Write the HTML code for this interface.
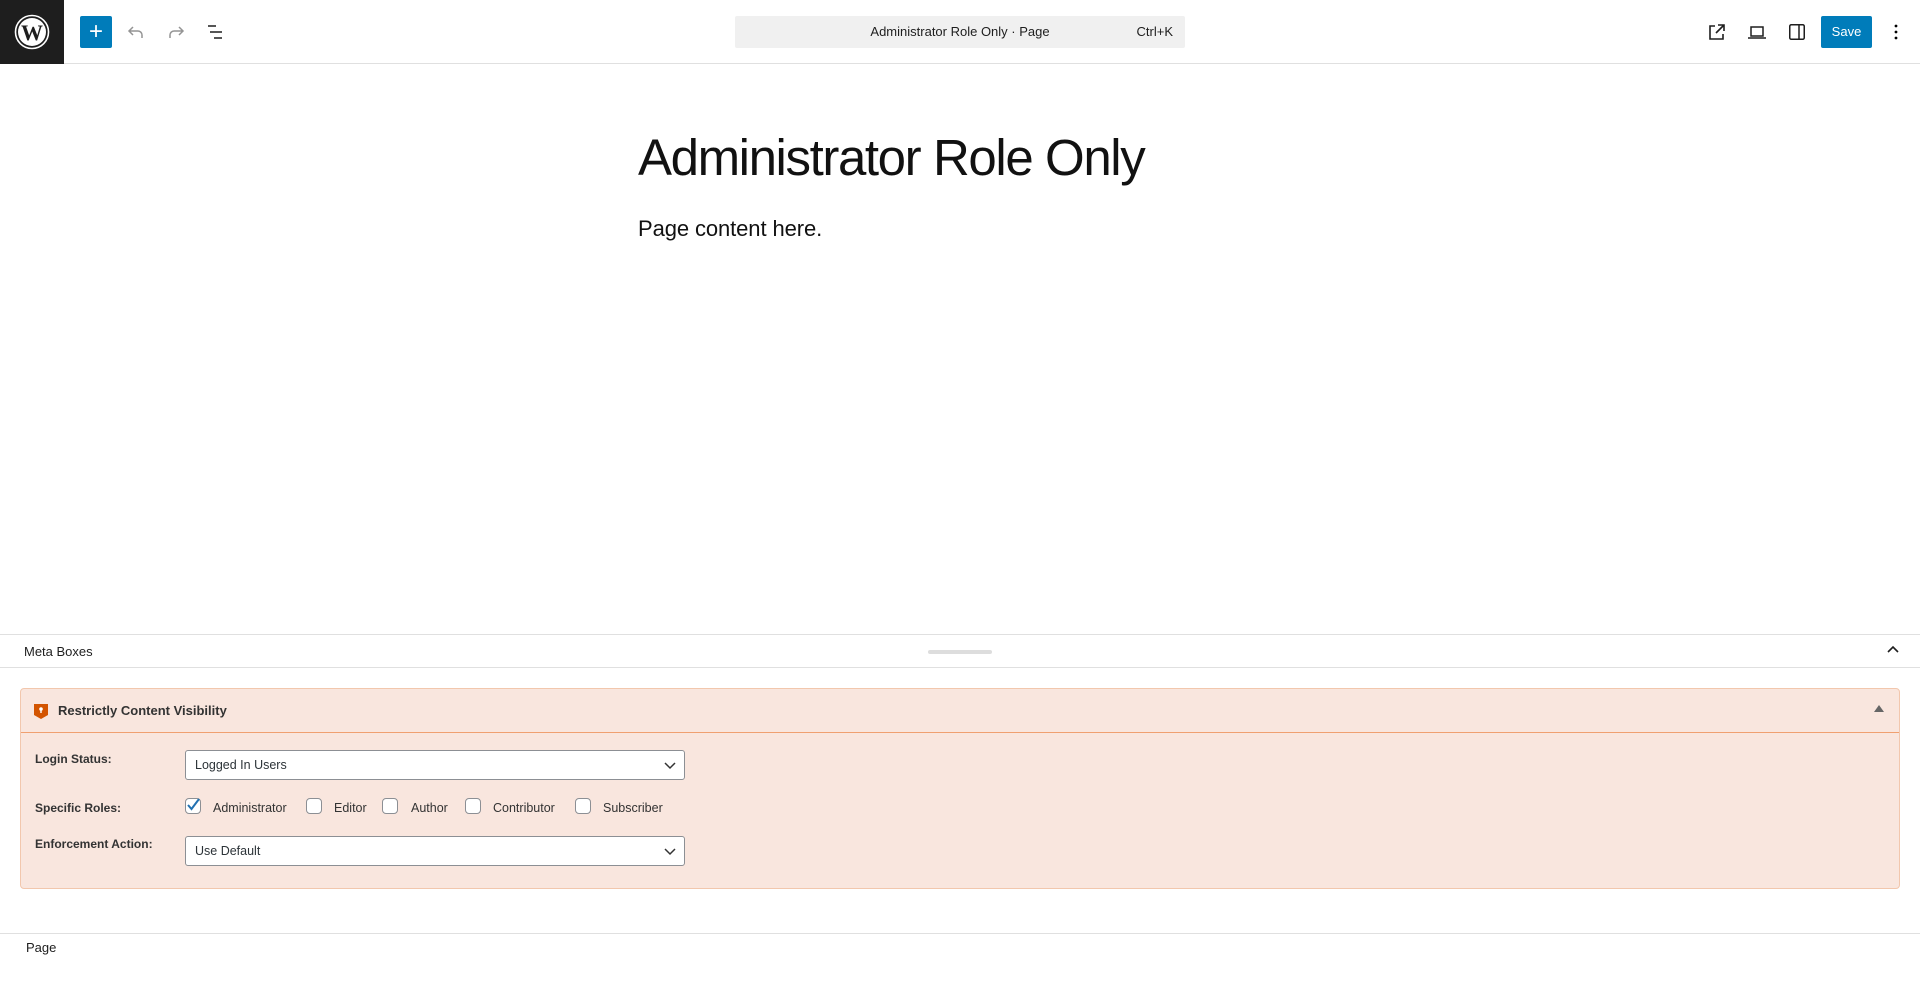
<!DOCTYPE html>
<html><head><meta charset="utf-8"><style>
*{box-sizing:border-box;margin:0;padding:0}
body{width:1920px;height:991px;background:#fff;font-family:"Liberation Sans",sans-serif;color:#1e1e1e;position:relative;overflow:hidden}
.abs{position:absolute}
.hdr{left:0;top:0;width:1920px;height:64px;border-bottom:1px solid #e0e0e0}
.logo{left:0;top:0;width:64px;height:64px;background:#1e1e1e;display:flex;align-items:center;justify-content:center}
.plus{left:80px;top:16px;width:32px;height:32px;background:#007cba;border-radius:2px;color:#fff;font-size:24px;line-height:31px;text-align:center}
.cmd{left:735px;top:16px;width:450px;height:32px;background:#f0f0f0;border-radius:2px;font-size:13px;line-height:32px}
.save{left:1821px;top:16px;width:51px;height:32px;background:#007cba;border-radius:2px;color:#fff;font-size:13px;line-height:32px;text-align:center}
.title{left:638px;top:128px;font-size:51px;font-weight:300;letter-spacing:-1.4px;white-space:nowrap;color:#111}
.para{left:638px;top:216px;font-size:22px;color:#111;letter-spacing:-0.1px}
.line{height:1px;background:#e0e0e0;left:0;width:1920px}
.box{left:20px;top:688px;width:1880px;height:201px;background:#f9e6de;border:1px solid #f2c7ad;border-radius:4px}
.bh{left:0;top:0;width:100%;height:44px;border-bottom:1px solid #f0a070}
.lbl{font-size:12px;font-weight:bold;color:#333}
.sel{left:164px;width:500px;height:30px;background:#fff;border:1px solid #8c8f94;border-radius:3px;font-size:12.5px;line-height:28px;padding-left:9px;color:#2c3338}
.cb{width:16px;height:16px;border:1px solid #8c8f94;border-radius:4px;background:#fff}
.rl{font-size:12.5px;color:#333}
</style></head><body>
<div class="abs hdr"></div>
<div class="abs logo"><svg width="36" height="36" viewBox="0 0 36 36"><circle cx="18" cy="18" r="16.5" fill="none" stroke="#fff" stroke-width="1.6"/><circle cx="18" cy="18" r="14" fill="#fff"/><text x="18" y="26" text-anchor="middle" font-family="Liberation Serif,serif" font-weight="bold" font-size="22" fill="#1e1e1e">W</text></svg></div>
<div class="abs plus">+</div>
<svg class="abs" style="left:124px;top:20px" width="24" height="24" viewBox="0 0 24 24"><path d="M9 7 5 11l4 4M5 11h9a4 4 0 0 1 4 4v3" fill="none" stroke="#949494" stroke-width="1.5"/></svg>
<svg class="abs" style="left:164px;top:20px" width="24" height="24" viewBox="0 0 24 24"><path d="M15 7l4 4-4 4M19 11h-9a4 4 0 0 0-4 4v3" fill="none" stroke="#949494" stroke-width="1.5"/></svg>
<svg class="abs" style="left:204px;top:20px" width="24" height="24" viewBox="0 0 24 24"><path d="M4 6h8M6 12h12M10 18h8" stroke="#1e1e1e" stroke-width="1.5"/></svg>
<div class="abs cmd"><span style="position:absolute;left:0;width:100%;text-align:center">Administrator Role Only · Page</span><span style="position:absolute;right:12px">Ctrl+K</span></div>
<svg class="abs" style="left:1705px;top:20px" width="24" height="24" viewBox="0 0 24 24"><path d="M10 6H5v13h13v-5M13 5h6v6M19 5l-8 8" fill="none" stroke="#1e1e1e" stroke-width="1.6"/></svg>
<svg class="abs" style="left:1745px;top:20px" width="24" height="24" viewBox="0 0 24 24"><path d="M6 7h12v9H6zM3 18h18" fill="none" stroke="#1e1e1e" stroke-width="1.5"/></svg>
<svg class="abs" style="left:1785px;top:20px" width="24" height="24" viewBox="0 0 24 24"><rect x="4.75" y="4.75" width="14.5" height="14.5" rx="1.5" fill="none" stroke="#1e1e1e" stroke-width="1.5"/><path d="M14 5v14" stroke="#1e1e1e" stroke-width="1.5"/></svg>
<div class="abs save">Save</div>
<svg class="abs" style="left:1884px;top:20px" width="24" height="24" viewBox="0 0 24 24"><circle cx="12" cy="6" r="1.4"/><circle cx="12" cy="12" r="1.4"/><circle cx="12" cy="18" r="1.4"/></svg>
<div class="abs title">Administrator Role Only</div>
<div class="abs para">Page content here.</div>
<div class="abs line" style="top:634px"></div>
<div class="abs" style="left:928px;top:650px;width:64px;height:4px;background:#ddd;border-radius:2px"></div>
<div class="abs" style="left:24px;top:644px;font-size:13px">Meta Boxes</div>
<svg class="abs" style="left:1885px;top:642px" width="16" height="16" viewBox="0 0 16 16"><path d="M3 10l5-5 5 5" fill="none" stroke="#1e1e1e" stroke-width="1.6"/></svg>
<div class="abs line" style="top:667px"></div>
<div class="abs box">
<div class="abs bh"></div>
<svg class="abs" style="left:12px;top:14px" width="16" height="17" viewBox="0 0 16 17"><path d="M1 1h14v11l-7 4-7-4z" fill="#d35400"/><circle cx="8" cy="6" r="1.8" fill="#fff"/><rect x="7.3" y="6" width="1.4" height="4" fill="#fff"/></svg>
<div class="abs lbl" style="left:37px;top:14px;font-size:13px">Restrictly Content Visibility</div>
<div class="abs" style="left:1853px;top:16px;width:0;height:0;border-left:5px solid transparent;border-right:5px solid transparent;border-bottom:7px solid #666"></div>
<div class="abs lbl" style="left:14px;top:63px">Login Status:</div>
<div class="abs sel" style="top:61px">Logged In Users<svg style="position:absolute;right:8px;top:9px" width="12" height="10" viewBox="0 0 12 10"><path d="M1 3l5 5 5-5" fill="none" stroke="#333" stroke-width="1.5"/></svg></div>
<div class="abs lbl" style="left:14px;top:112px">Specific Roles:</div>
<div class="abs cb" style="left:164px;top:109px"><svg width="14" height="14" viewBox="0 0 14 14" style="position:absolute;left:0;top:-1px"><path d="M2 7l3.5 4L13 1" fill="none" stroke="#2271b1" stroke-width="2"/></svg></div>
<div class="abs rl" style="left:192px;top:112px">Administrator</div>
<div class="abs cb" style="left:285px;top:109px"></div>
<div class="abs rl" style="left:313px;top:112px">Editor</div>
<div class="abs cb" style="left:361px;top:109px"></div>
<div class="abs rl" style="left:390px;top:112px">Author</div>
<div class="abs cb" style="left:444px;top:109px"></div>
<div class="abs rl" style="left:472px;top:112px">Contributor</div>
<div class="abs cb" style="left:554px;top:109px"></div>
<div class="abs rl" style="left:582px;top:112px">Subscriber</div>
<div class="abs lbl" style="left:14px;top:148px">Enforcement Action:</div>
<div class="abs sel" style="top:147px">Use Default<svg style="position:absolute;right:8px;top:9px" width="12" height="10" viewBox="0 0 12 10"><path d="M1 3l5 5 5-5" fill="none" stroke="#333" stroke-width="1.5"/></svg></div>
</div>
<div class="abs line" style="top:933px"></div>
<div class="abs" style="left:26px;top:940px;font-size:13px">Page</div>
</body></html>
